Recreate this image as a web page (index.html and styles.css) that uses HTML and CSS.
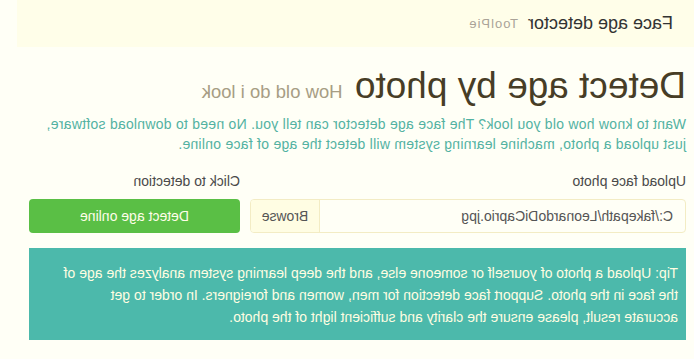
FILE: index.html
```html
<!DOCTYPE html>
<html>
<head>
<meta charset="utf-8">
<link rel="stylesheet" href="styles.css">
</head>
<body>
<div class="page">
  <nav class="navbar">
    <span class="brand">Face age detector</span>
    <span class="brand-sub">ToolPie</span>
  </nav>
  <main class="content">
    <h1 class="title">Detect age by photo <small class="subtitle">How old do i look</small></h1>
    <p class="lead">Want to know how old you look? The face age detector can tell you. No need to download software, just upload a photo, machine learning system will detect the age of face online.</p>
    <div class="form-row">
      <div class="col-upload">
        <label class="label">Upload face photo</label>
        <div class="file-group">
          <span class="file-name">C:/fakepath/LeonardoDiCaprio.jpg</span>
          <span class="browse">Browse</span>
        </div>
      </div>
      <div class="col-detect">
        <label class="label">Click to detection</label>
        <button class="btn-detect">Detect age online</button>
      </div>
    </div>
    <div class="tip">Tip: Upload a photo of yourself or someone else, and the deep learning system analyzes the age of the face in the photo. Support face detection for men, women and foreigners. In order to get<br>accurate result, please ensure the clarity and sufficient light of the photo.</div>
  </main>
</div>
</body>
</html>
```
FILE: styles.css
```css
html, body {
  margin: 0;
  padding: 0;
  background: #fffff6;
}
.page {
  width: 694px;
  height: 359px;
  overflow: hidden;
  transform: scaleX(-1);
  font-family: "Liberation Sans", Arial, sans-serif;
  color: #333;
}
.navbar {
  width: 677px;
  height: 47px;
  background: #fffee9;
  display: flex;
  align-items: center;
  box-sizing: border-box;
  padding-left: 21px;
  gap: 10px;
}
.brand {
  font-size: 18px;
  color: #333;
}
.brand-sub {
  font-size: 13px;
  color: #aaa398;
  letter-spacing: 1px;
}
.content {
  width: 657px;
  margin-left: 8px;
}
.title {
  margin: 17px 0 0 0;
  font-size: 37px;
  line-height: 44px;
  font-weight: 400;
  color: #473d26;
}
.subtitle {
  font-size: 18.5px;
  color: #a79d84;
  margin-left: 2px;
}
.lead {
  margin: 0;
  font-size: 14px;
  line-height: 20px;
  letter-spacing: 0.25px;
  color: #53b2a2;
}
.form-row {
  display: flex;
  margin-top: 18px;
}
.col-upload {
  width: 436px;
  display: flex;
  flex-direction: column;
}
.col-detect {
  width: 211px;
  margin-left: 10px;
  display: flex;
  flex-direction: column;
}
.label {
  font-size: 14px;
  line-height: 18px;
  color: #4a4a4a;
  margin-bottom: 9px;
}
.file-group {
  display: flex;
  height: 34px;
  box-sizing: border-box;
  border: 1px solid #f3ecc4;
  border-radius: 4px;
  background: #fffff6;
  font-size: 14px;
  color: #555;
  overflow: hidden;
}
.file-name {
  flex: 1;
  display: flex;
  align-items: center;
  padding-left: 12px;
}
.browse {
  width: 68px;
  display: flex;
  align-items: center;
  justify-content: center;
  background: #fffde3;
  border-left: 1px solid #f3ecc4;
  color: #555;
}
.btn-detect {
  height: 34px;
  border: none;
  border-radius: 4px;
  background: #5abf45;
  color: #fffde8;
  font-family: "Liberation Sans", Arial, sans-serif;
  font-size: 14px;
  padding: 0;
}
.tip {
  margin-top: 15px;
  background: #4cb9ab;
  color: #fffde2;
  font-size: 14px;
  line-height: 22px;
  padding: 14px 18px 14px 8px;
  height: 92px;
  box-sizing: border-box;
  width: 657px;
}
```
